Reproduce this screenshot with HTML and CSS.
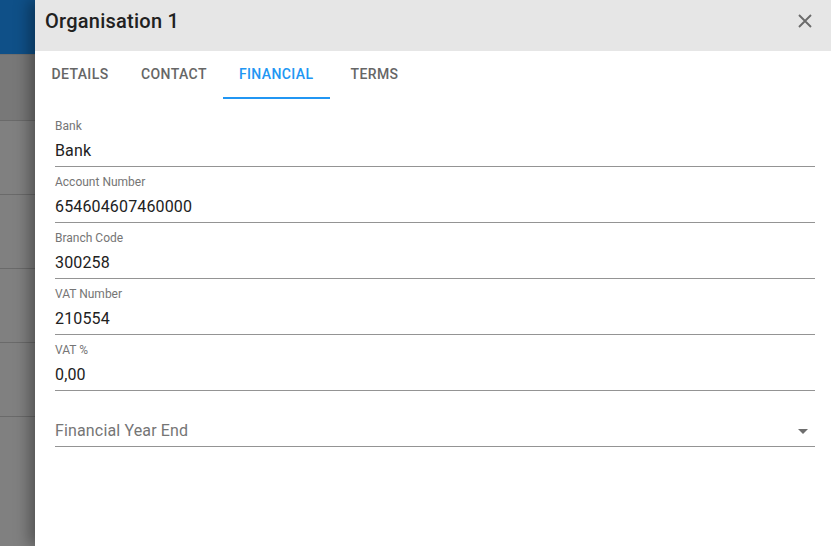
FILE: index.html
```html
<!DOCTYPE html>
<html>
<head>
<meta charset="utf-8">
<link rel="stylesheet" href="styles.css">
</head>
<body>
<div class="screen">
  <div class="backdrop">
    <div class="bd-appbar"></div>
    <div class="bd-thead"></div>
    <div class="bd-row"></div>
    <div class="bd-row"></div>
    <div class="bd-row"></div>
    <div class="bd-row"></div>
    <div class="bd-row bd-last"></div>
  </div>
  <div class="dialog">
    <div class="dialog-header">
      <h1 class="dialog-title">Organisation 1</h1>
      <button class="close-btn" aria-label="Close">
        <svg width="14" height="14" viewBox="0 0 14 14"><path d="M1 1 L13 13 M13 1 L1 13" stroke="#6b6b6b" stroke-width="1.9" fill="none"/></svg>
      </button>
    </div>
    <div class="tabs">
      <div class="tab">Details</div>
      <div class="tab">Contact</div>
      <div class="tab tab-active">Financial</div>
      <div class="tab">Terms</div>
    </div>
    <div class="form">
      <div class="field">
        <div class="field-label">Bank</div>
        <div class="field-value">Bank</div>
      </div>
      <div class="field">
        <div class="field-label">Account Number</div>
        <div class="field-value">654604607460000</div>
      </div>
      <div class="field">
        <div class="field-label">Branch Code</div>
        <div class="field-value">300258</div>
      </div>
      <div class="field">
        <div class="field-label">VAT Number</div>
        <div class="field-value">210554</div>
      </div>
      <div class="field">
        <div class="field-label">VAT %</div>
        <div class="field-value">0,00</div>
      </div>
      <div class="field field-select">
        <div class="field-label"></div>
        <div class="field-value placeholder">
          <span>Financial Year End</span>
          <svg class="caret" width="10" height="5" viewBox="0 0 10 5"><path d="M0 0 L10 0 L5 5 Z" fill="#6e6e6e"/></svg>
        </div>
      </div>
    </div>
  </div>
</div>
</body>
</html>
```
FILE: styles.css
```css
html, body {
  margin: 0;
  padding: 0;
  width: 831px;
  height: 546px;
  overflow: hidden;
  font-family: Roboto, "Noto Sans", Arial, sans-serif;
}

.screen {
  display: flex;
  width: 831px;
  height: 546px;
}

.backdrop {
  width: 35px;
  flex: none;
  background: #808080;
  display: flex;
  flex-direction: column;
}

.bd-appbar {
  height: 54px;
  background: #0f5088;
  flex: none;
}

.bd-thead {
  height: 65px;
  background: #787878;
  border-top: 1px solid #6f6f6f;
  flex: none;
}

.bd-row {
  height: 73px;
  border-top: 1px solid #6a6a6a;
  flex: none;
}

.dialog {
  flex: 1;
  background: #fff;
  position: relative;
  z-index: 1;
  box-shadow: -6px 0 14px rgba(0, 0, 0, 0.35);
  display: flex;
  flex-direction: column;
}

.dialog-header {
  height: 51px;
  background: #e6e6e6;
  display: flex;
  align-items: flex-start;
  justify-content: space-between;
  padding: 0 19px 0 10px;
  box-sizing: border-box;
}

.dialog-title {
  margin: 0;
  padding-top: 8px;
  font-size: 20px;
  line-height: 26px;
  font-weight: 500;
  letter-spacing: 0.25px;
  color: #212121;
}

.close-btn {
  margin-top: 14px;
  padding: 0;
  border: 0;
  background: none;
  width: 14px;
  height: 14px;
  display: flex;
}

.tabs {
  display: flex;
  height: 48px;
}

.tab {
  min-width: 90px;
  padding: 0 16px;
  box-sizing: border-box;
  text-align: center;
  font-size: 14px;
  font-weight: 500;
  letter-spacing: 0.4px;
  text-transform: uppercase;
  color: #666;
  line-height: 46px;
  border-bottom: 2px solid transparent;
}

.tab-active {
  color: #2196f3;
  border-bottom-color: #2196f3;
}

.form {
  padding: 12px 16px 0 20px;
}

.field {
  padding: 7px 0 3px;
  border-bottom: 1px solid rgba(0, 0, 0, 0.42);
}

.field-label {
  font-size: 12px;
  line-height: 16px;
  height: 16px;
  color: #757575;
}

.field-value {
  margin-top: 5px;
  font-size: 16px;
  line-height: 24px;
  letter-spacing: 0.15px;
  color: #212121;
}

.placeholder {
  color: #757575;
  display: flex;
  align-items: center;
  justify-content: space-between;
  padding-right: 7px;
}

.caret {
  display: block;
}
```
